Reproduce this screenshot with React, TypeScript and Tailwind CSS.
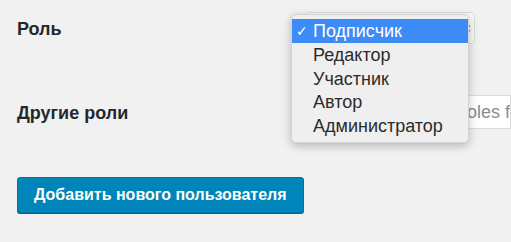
const roles = ['Подписчик', 'Редактор', 'Участник', 'Автор', 'Администратор']

export default function App() {
  return (
    <div
      className="w-[511px] h-[242px] overflow-hidden bg-[#f1f1f1] text-[#23282d]"
      style={{ fontFamily: '"Liberation Sans", Arial, sans-serif' }}
    >
      <div className="pl-[17px] pt-[12px]">
        {/* Role row */}
        <div className="flex items-start">
          <div className="w-[288px] pt-[6px] text-[18px] font-bold leading-[22px]">Роль</div>
          <div className="relative">
            <div className="w-[170px] h-[32px] rounded-[4px] border border-[#dcdcdc] bg-[#f8f8f8] flex items-center justify-end pr-[4px] text-[#555] text-[10px] leading-[8px]">
              <span className="flex flex-col items-center">
                <span>▴</span>
                <span>▾</span>
              </span>
            </div>
            {/* open dropdown */}
            <div className="absolute left-[-14px] top-[2px] w-[178px] py-[4px] rounded-[5px] bg-[#efefef] border border-[#d4d4d4] shadow-[0_3px_10px_rgba(0,0,0,0.25)] text-[18px] leading-[24px] text-[#2b2b2b]">
              {roles.map((r, i) => (
                <div
                  key={r}
                  className={
                    'flex items-center h-[23.8px] ' + (i === 0 ? 'bg-[#3d8bf6] text-white' : '')
                  }
                >
                  <span className="w-[21px] pl-[4px] text-[14px]">{i === 0 ? '✓' : ''}</span>
                  <span>{r}</span>
                </div>
              ))}
            </div>
          </div>
        </div>

        {/* Other roles row */}
        <div className="flex items-start mt-[51px]">
          <div className="w-[288px] pt-[7px] text-[18px] font-bold leading-[22px]">Другие роли</div>
          <div className="w-[220px] h-[34px] border border-[#dcdcdc] bg-white flex items-center pl-[14px] text-[18px] text-[#8a8d90] whitespace-nowrap overflow-hidden">
            Choose additional roles for this user
          </div>
        </div>

        {/* Submit */}
        <div className="mt-[48px]">
          <button className="h-[36px] px-[16px] rounded-[3px] bg-[#0085ba] border border-[#0073aa] shadow-[0_1px_0_#006799] text-white text-[16px] font-bold">
            Добавить нового пользователя
          </button>
        </div>
      </div>
    </div>
  )
}
